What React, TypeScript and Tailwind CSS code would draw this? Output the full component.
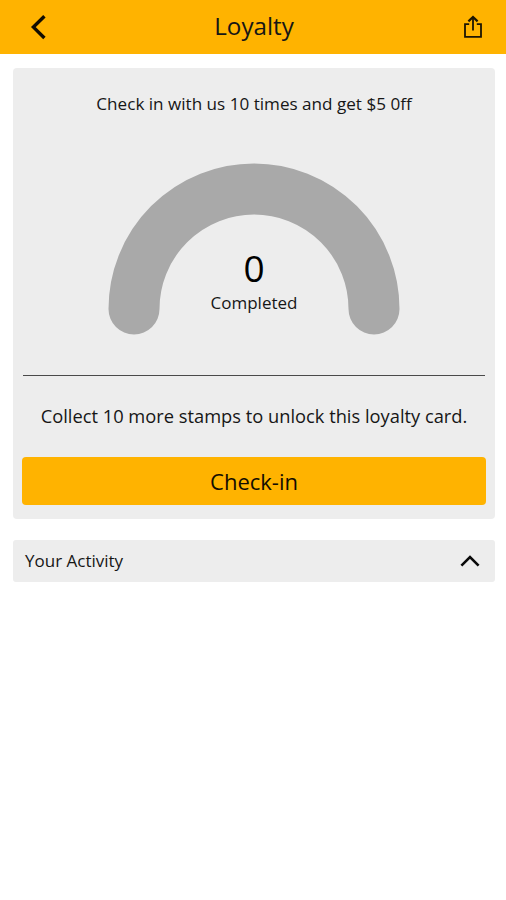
const STAMPS_REQUIRED = 10;

function BackIcon() {
  return (
    <svg className="h-[26px] w-4" viewBox="0 0 16 26" fill="none" stroke="#120d02" strokeWidth="3.4" aria-hidden="true">
      <path d="M14.4 2.2 3.4 13.1l11 10.9" />
    </svg>
  );
}

function ShareIcon() {
  return (
    <svg className="h-6 w-5" viewBox="0 0 20 24" fill="none" stroke="#1c1503" strokeWidth="1.8" aria-hidden="true">
      <path d="M6.2 9.2H2v12.6h16V9.2h-4.2" />
      <path d="M10 15.6V3" />
      <path d="M5.4 6.4 10 2l4.6 4.4" strokeWidth="2.2" />
    </svg>
  );
}

function ChevronUpIcon() {
  return (
    <svg className="h-3 w-5" viewBox="0 0 20 12" fill="none" stroke="#0a0a0a" strokeWidth="2.6" aria-hidden="true">
      <path d="M1.4 10.6 10 2l8.6 8.6" />
    </svg>
  );
}

function StampGauge({ completed }: { completed: number }) {
  return (
    <div className="grid h-[172px] w-[292px] justify-items-center">
      <svg className="col-start-1 row-start-1" width="292" height="172" viewBox="0 0 292 172" aria-hidden="true">
        <path d="M26 146a120 120 0 0 1 240 0" fill="none" stroke="#a9a9a9" strokeWidth="51" strokeLinecap="round" />
      </svg>
      <div className="col-start-1 row-start-1 flex flex-col items-center pt-[83px]">
        <span className="text-[37px] leading-[44px] text-black">{completed}</span>
        <span className="mt-px text-[17px] leading-6">Completed</span>
      </div>
    </div>
  );
}

export default function App() {
  const completed = 0;

  return (
    <div className="min-h-screen bg-white font-['Open_Sans',sans-serif] text-[#161616]">
      <header className="flex h-[54px] items-center justify-between bg-[#ffb300] pr-[23px] pl-[30px]">
        <button type="button" aria-label="Back" className="w-[15px]">
          <BackIcon />
        </button>
        <h1 className="mb-0.5 text-[24.2px] leading-8">Loyalty</h1>
        <button type="button" aria-label="Share">
          <ShareIcon />
        </button>
      </header>

      <main className="pt-3.5 pr-[11px] pl-[13px]">
        {/* Loyalty card */}
        <section className="flex h-[451px] flex-col items-center rounded-[4px] bg-[#ededed] px-[9px] pt-6">
          <p className="text-[17.1px] leading-6">Check in with us 10 times and get $5 0ff</p>
          <div className="mt-[47px]">
            <StampGauge completed={completed} />
          </div>
          <hr className="mt-10 w-[462px] border-[#4a4a4a]" />
          <p className="mt-7 text-[18.3px] leading-6">
            Collect {STAMPS_REQUIRED - completed} more stamps to unlock this loyalty card.
          </p>
          <button type="button" className="mt-[29px] h-12 w-full rounded-[4px] bg-[#ffb300] text-[22px] text-[#120d02]">
            Check-in
          </button>
        </section>

        {/* Activity accordion */}
        <button type="button" className="mt-[21px] flex h-[42px] w-full items-center justify-between rounded-[3px] bg-[#ededed] pr-[15px] pl-3">
          <span className="text-[17px]">Your Activity</span>
          <ChevronUpIcon />
        </button>
      </main>
    </div>
  );
}
